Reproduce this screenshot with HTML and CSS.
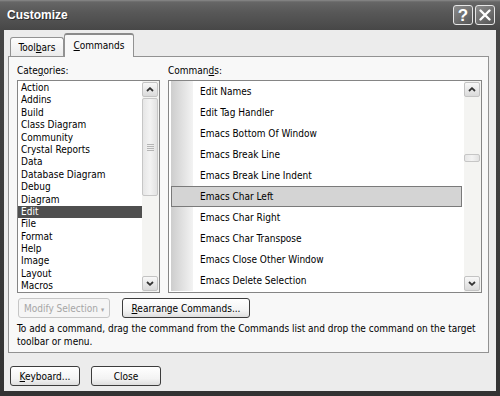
FILE: index.html
```html
<!DOCTYPE html>
<html lang="en">

<head>
  <meta charset="UTF-8" />
  <title>Customize</title>
  <link rel="stylesheet" href="styles.css">
</head>

<body>
  <div class="window">
    <!-- Title Bar -->
    <div class="titlebar">
      <span class="title">Customize</span>
      <div class="caption-btns">
        <button class="cap-btn help-btn">?</button>
        <button class="cap-btn">
          <svg viewBox="0 0 18 18" width="18" height="18">
            <path d="M4.5 4.5L13.5 13.5M13.5 4.5L4.5 13.5" stroke="white" stroke-width="2.4" stroke-linecap="round"></path>
          </svg>
        </button>
      </div>
    </div>

    <div class="client">
      <!-- Tabs -->
      <div class="tabs">
        <div class="tab">Tool<u>b</u>ars</div>
        <div class="tab active"><u>C</u>ommands</div>
      </div>

      <div class="panel">
        <div class="columns">
          <!-- Categories -->
          <div class="col">
            <div class="label">Cate<u>g</u>ories:</div>
            <div class="listbox">
              <ul class="cat-items">
                <li>Action</li>
                <li>Addins</li>
                <li>Build</li>
                <li>Class Diagram</li>
                <li>Community</li>
                <li>Crystal Reports</li>
                <li>Data</li>
                <li>Database Diagram</li>
                <li>Debug</li>
                <li>Diagram</li>
                <li class="selected">Edit</li>
                <li>File</li>
                <li>Format</li>
                <li>Help</li>
                <li>Image</li>
                <li>Layout</li>
                <li>Macros</li>
              </ul>
              <div class="scrollbar">
                <div class="sb-btn">
                  <svg viewBox="0 0 8 5" width="8" height="5"><path d="M1 4L4 1.2L7 4" class="chev"></path></svg>
                </div>
                <div class="sb-track">
                  <div class="sb-thumb cat-thumb"><span class="grip"></span></div>
                </div>
                <div class="sb-btn">
                  <svg viewBox="0 0 8 5" width="8" height="5"><path d="M1 1L4 3.8L7 1" class="chev"></path></svg>
                </div>
              </div>
            </div>
          </div>

          <!-- Commands -->
          <div class="col">
            <div class="label">Comman<u>d</u>s:</div>
            <div class="listbox">
              <div class="cmd-items">
                <div class="cmd-row">Edit Names</div>
                <div class="cmd-row">Edit Tag Handler</div>
                <div class="cmd-row">Emacs Bottom Of Window</div>
                <div class="cmd-row">Emacs Break Line</div>
                <div class="cmd-row">Emacs Break Line Indent</div>
                <div class="cmd-row selected">Emacs Char Left</div>
                <div class="cmd-row">Emacs Char Right</div>
                <div class="cmd-row">Emacs Char Transpose</div>
                <div class="cmd-row">Emacs Close Other Window</div>
                <div class="cmd-row">Emacs Delete Selection</div>
              </div>
              <div class="scrollbar">
                <div class="sb-btn">
                  <svg viewBox="0 0 8 5" width="8" height="5"><path d="M1 4L4 1.2L7 4" class="chev"></path></svg>
                </div>
                <div class="sb-track">
                  <div class="sb-thumb cmd-thumb"></div>
                </div>
                <div class="sb-btn">
                  <svg viewBox="0 0 8 5" width="8" height="5"><path d="M1 1L4 3.8L7 1" class="chev"></path></svg>
                </div>
              </div>
            </div>
          </div>
        </div>

        <!-- Selection Buttons -->
        <div class="actions">
          <button class="btn modify-btn" disabled>Modify Selection <span class="arrow">&#9662;</span></button>
          <button class="btn rearrange-btn"><u>R</u>earrange Commands...</button>
        </div>

        <p class="hint">To add a command, drag the command from the Commands list and drop the command on the target<br>toolbar or menu.</p>
      </div>

      <!-- Footer -->
      <div class="footer">
        <button class="btn footer-btn"><u>K</u>eyboard...</button>
        <button class="btn footer-btn">Close</button>
      </div>
    </div>
  </div>
</body>

</html>
```

FILE: styles.css
```css
/* General Styles */
body {
  margin: 0;
  padding: 0;
  background: #3a3a3a;
  font-family: "DejaVu Sans Condensed", "DejaVu Sans", sans-serif;
  font-stretch: condensed;
  font-size: 10px;
  color: #000;
}

u {
  text-decoration-thickness: 1px;
  text-underline-offset: 1px;
}

/* Window Frame */
.window {
  width: 500px;
  height: 396px;
  display: flex;
  flex-direction: column;
  background: linear-gradient(#474747, #333);
}

/* Title Bar */
.titlebar {
  height: 30px;
  flex-shrink: 0;
  display: flex;
  align-items: center;
  justify-content: space-between;
  padding: 0 5px 0 7px;
  background: linear-gradient(#8a8a8a 0, #666 2px, #585858 12px, #4d4d4d 24px, #474747 30px);
}

.title {
  color: #fff;
  font-family: "Liberation Sans", sans-serif;
  font-stretch: normal;
  font-weight: bold;
  font-size: 12px;
  text-shadow: 1px 1px 0 #2c2c2c;
}

.caption-btns {
  display: flex;
  gap: 2px;
}

.cap-btn {
  width: 20px;
  height: 20px;
  padding: 0;
  box-sizing: border-box;
  border: 1px solid #e6e6e6;
  border-radius: 3px;
  background: linear-gradient(145deg, #8c8c8c, #555);
  display: flex;
  align-items: center;
  justify-content: center;
}

.help-btn {
  color: #fff;
  font-family: "Liberation Sans", sans-serif;
  font-stretch: normal;
  font-weight: bold;
  font-size: 17px;
  line-height: 1;
}

/* Client Area */
.client {
  flex: 1;
  margin: 0 4px 5px;
  padding: 3px 7px 0 4px;
  background: #ececec;
  display: flex;
  flex-direction: column;
}

/* Tabs */
.tabs {
  height: 23px;
  display: flex;
  align-items: flex-end;
  padding-left: 2px;
}

.tab {
  width: 54px;
  height: 19px;
  box-sizing: border-box;
  border: 1px solid #929292;
  border-bottom: none;
  border-radius: 3px 3px 0 0;
  background: linear-gradient(#fdfdfd, #ebebeb);
  display: flex;
  align-items: center;
  justify-content: center;
}

.tab.active {
  width: 70px;
  height: 24px;
  margin-bottom: -1px;
  padding-bottom: 2px;
  background: #f8f8f8;
  border-top: 2px solid #8a8a8a;
  position: relative;
}

/* Tab Panel */
.panel {
  height: 297px;
  box-sizing: border-box;
  border: 1px solid #929292;
  background: #f8f8f8;
  padding: 7px 6px 0 8px;
}

.columns {
  display: grid;
  grid-template-columns: 143px 314px;
  gap: 8px;
}

.label {
  line-height: 14px;
  margin-bottom: 2px;
}

.listbox {
  height: 213px;
  box-sizing: border-box;
  border: 1px solid #858585;
  background: #fff;
  display: flex;
}

/* Categories List */
.cat-items {
  flex: 1;
  list-style: none;
  margin: 0;
  padding: 1px 0 0;
  overflow: hidden;
}

.cat-items li {
  line-height: 12.4px;
  height: 12.4px;
  padding-left: 3px;
  white-space: nowrap;
}

.cat-items li.selected {
  background: #4f4f4f;
  color: #fff;
}

/* Commands List */
.cmd-items {
  flex: 1;
  padding: 0 2px;
  overflow: hidden;
}

.cmd-row {
  height: 21px;
  box-sizing: border-box;
  display: flex;
  align-items: center;
  padding-left: 29px;
  white-space: nowrap;
  background: linear-gradient(90deg, #cdcdcd 0, #f3f3f3 22px, transparent 22px);
}

.cmd-row.selected {
  border: 1px solid #7a7a7a;
  padding-left: 28px;
  background: #d4d4d4;
}

/* Scrollbars */
.scrollbar {
  width: 17px;
  flex-shrink: 0;
  display: flex;
  flex-direction: column;
  gap: 1px;
  padding: 1px 1px 1px 0;
  box-sizing: border-box;
  background: #f4f4f2;
}

.sb-btn {
  height: 15px;
  box-sizing: border-box;
  border: 1px solid #c3c3c3;
  border-radius: 2px;
  background: linear-gradient(#f8f8f8, #dadada);
  display: flex;
  align-items: center;
  justify-content: center;
}

.chev {
  fill: none;
  stroke: #333;
  stroke-width: 1.8;
}

.sb-track {
  flex: 1;
}

.sb-thumb {
  box-sizing: border-box;
  border: 1px solid #c6c6c6;
  border-radius: 2px;
  background: linear-gradient(90deg, #e6e6e6, #f3f3f3 50%, #e2e2e2);
  display: flex;
  align-items: center;
  justify-content: center;
}

.cat-thumb {
  height: 98px;
}

.cmd-thumb {
  height: 8px;
  margin-top: 56px;
}

.grip {
  width: 7px;
  height: 7px;
  background: repeating-linear-gradient(#b5b5b5 0 1px, transparent 1px 2px);
}

/* Buttons */
.btn {
  height: 20px;
  box-sizing: border-box;
  padding: 0;
  border: 1px solid #3c3c3c;
  border-radius: 3px;
  background: linear-gradient(#fff, #f3f3f3 65%, #dedede);
  font: inherit;
  font-stretch: condensed;
  color: #000;
}

.actions {
  display: flex;
  gap: 12px;
  margin-top: 5px;
  padding-left: 1px;
}

.modify-btn {
  width: 92px;
  border-color: #c6c6c6;
  background: #f5f5f5;
  color: #a6a6a6;
}

.modify-btn .arrow {
  font-size: 7px;
}

.rearrange-btn {
  width: 128px;
}

.hint {
  margin: 5px 0 0;
  line-height: 12.5px;
  white-space: nowrap;
}

/* Footer */
.footer {
  display: flex;
  gap: 11px;
  margin-top: 13px;
  padding-left: 2px;
}

.footer-btn {
  width: 70px;
}
```
